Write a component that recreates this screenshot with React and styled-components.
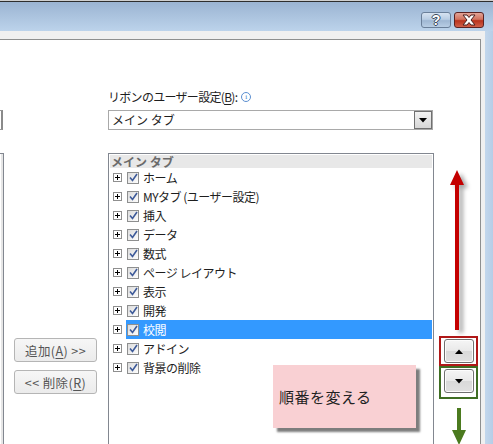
import React from 'react';
import styled, { createGlobalStyle } from 'styled-components';

const GlobalStyle = createGlobalStyle`
  html, body { margin: 0; padding: 0; }
  body {
    font-family: "Noto Sans CJK JP", "Noto Sans", sans-serif;
    font-size: 12px;
    color: #1e1e1e;
  }
`;

const items = [
  'ホーム',
  'MYタブ (ユーザー設定)',
  '挿入',
  'データ',
  '数式',
  'ページ レイアウト',
  '表示',
  '開発',
  '校閲',
  'アドイン',
  '背景の削除',
];
const selectedIndex = 8;

function App() {
  return (
    <>
      <GlobalStyle />
      <Screen>
        <TopStrip />
        <TitleBar>
          <CaptionButton kind="help">
            <HelpMark>?</HelpMark>
          </CaptionButton>
          <CaptionButton kind="close">
            <svg width="16" height="12" viewBox="0 0 16 12">
              <path
                d="M2 1 H6 L8 3.5 L10 1 H14 L10 6 L14 11 H10 L8 8.5 L6 11 H2 L6 6 Z"
                fill="#fff"
                stroke="#4a2020"
                strokeWidth="1"
                strokeLinejoin="round"
              />
            </svg>
          </CaptionButton>
        </TitleBar>

        <Body>
          <Main>
            <Panel>
              <LeftColumn>
                <LeftCombo />
                <LeftRow>
                  <LeftList />
                  <ButtonStack>
                    <PushButton>
                      追加(<u>A</u>) &gt;&gt;
                    </PushButton>
                    <PushButton>
                      &lt;&lt; 削除(<u>R</u>)
                    </PushButton>
                  </ButtonStack>
                </LeftRow>
              </LeftColumn>

              <CenterColumn>
                <FieldLabel>
                  リボンのユーザー設定(<u>B</u>):
                  <InfoIcon>i</InfoIcon>
                </FieldLabel>
                <Combo>
                  <ComboText>メイン タブ</ComboText>
                  <ComboArrow>
                    <svg width="8" height="5" viewBox="0 0 8 5">
                      <path d="M0 0 H8 L4 4.5 Z" fill="#000" />
                    </svg>
                  </ComboArrow>
                </Combo>

                <TreeList>
                  <TreeHeader>メイン タブ</TreeHeader>
                  {items.map((label, i) => (
                    <TreeRow key={label}>
                      <Expander />
                      <ItemBody selected={i === selectedIndex}>
                        <Check>
                          <svg width="9" height="9" viewBox="0 0 9 9">
                            <path
                              d="M1 4.5 L3.5 7.5 L8 1"
                              fill="none"
                              stroke="#3d5a99"
                              strokeWidth="1.6"
                            />
                          </svg>
                        </Check>
                        <ItemLabel>{label}</ItemLabel>
                      </ItemBody>
                    </TreeRow>
                  ))}
                </TreeList>
              </CenterColumn>

              <RightColumn>
                <Outline color="#b01818">
                  <MoveButton>
                    <svg width="8" height="5" viewBox="0 0 8 5">
                      <path d="M0 5 H8 L4 0.5 Z" fill="#000" />
                    </svg>
                  </MoveButton>
                </Outline>
                <Outline color="#3f6e23" tall>
                  <MoveButton>
                    <svg width="8" height="5" viewBox="0 0 8 5">
                      <path d="M0 0 H8 L4 4.5 Z" fill="#000" />
                    </svg>
                  </MoveButton>
                </Outline>
              </RightColumn>

              <UpArrow width="16" height="162" viewBox="0 0 16 162">
                <path d="M8 0 L15 15 H10 V160 H6 V15 H1 Z" fill="#c40000" />
              </UpArrow>
              <DownArrow width="16" height="40" viewBox="0 0 16 40">
                <path d="M6 0 H10 V22 H15 L8 37 L1 22 H6 Z" fill="#4b7a1f" />
              </DownArrow>

              <Callout>順番を変える</Callout>
            </Panel>
          </Main>
          <Frame />
        </Body>
      </Screen>
    </>
  );
}

const Screen = styled.div`
  width: 493px;
  height: 444px;
  overflow: hidden;
  display: flex;
  flex-direction: column;
  background: #f0f0f0;
`;

const TopStrip = styled.div`
  height: 2px;
  background: linear-gradient(#cfcfcf 50%, #2e2e2e 50%);
`;

const TitleBar = styled.div`
  height: 29px;
  box-sizing: border-box;
  padding: 10px 9px 0 0;
  display: flex;
  justify-content: flex-end;
  align-items: flex-start;
  gap: 3px;
  background: linear-gradient(#9bb4d2, #bcd3eb);
`;

const CaptionButton = styled.div`
  width: 30px;
  height: 16px;
  box-sizing: border-box;
  border-radius: 3px;
  display: flex;
  align-items: center;
  justify-content: center;
  border: 1px solid ${(p) => (p.kind === 'close' ? '#5b2222' : '#6a7f99')};
  background: ${(p) =>
    p.kind === 'close'
      ? 'linear-gradient(#e3a497 0%, #d2725e 45%, #b9321c 55%, #d0604a 100%)'
      : 'linear-gradient(#d6e3f1 0%, #b9cde3 45%, #9fb7d3 55%, #b8cde4 100%)'};
`;

const HelpMark = styled.span`
  font-family: "Liberation Sans", Arial, sans-serif;
  font-weight: bold;
  font-size: 14px;
  line-height: 14px;
  color: #fff;
  text-shadow: 1px 0 #3c4a5c, -1px 0 #3c4a5c, 0 1px #3c4a5c, 0 -1px #3c4a5c;
`;

const Body = styled.div`
  flex: 1;
  display: flex;
  min-height: 0;
`;

const Main = styled.div`
  flex: 1;
  display: flex;
  padding: 8px 4px 0 0;
  background: #f0f0f0;
`;

const Frame = styled.div`
  width: 8px;
  background: linear-gradient(90deg, #c3d7ec, #b6cde7);
`;

const Panel = styled.div`
  position: relative;
  flex: 1;
  display: flex;
  background: #fff;
  border-top: 1px solid #8e8f8f;
  border-right: 1px solid #8e8f8f;
`;

const LeftColumn = styled.div`
  width: 108px;
  display: flex;
  flex-direction: column;
  padding-top: 70px;
`;

const LeftCombo = styled.div`
  width: 23px;
  height: 20px;
  margin-left: -20px;
  box-sizing: border-box;
  border: 1px solid #9a9a9a;
  border-right: 2px solid #8a8a8a;
`;

const LeftRow = styled.div`
  flex: 1;
  display: flex;
  margin-top: 23px;
`;

const LeftList = styled.div`
  width: 4px;
  box-sizing: border-box;
  border-right: 1px solid #828790;
  border-top: 1px solid #828790;
  box-shadow: inset -2px 0 0 #e6e6e6;
`;

const ButtonStack = styled.div`
  display: flex;
  flex-direction: column;
  gap: 8px;
  padding: 185px 0 0 10px;
`;

const PushButton = styled.div`
  width: 83px;
  height: 24px;
  box-sizing: border-box;
  border: 1px solid #b5b5b5;
  border-radius: 3px;
  background: linear-gradient(#f6f6f6, #ebebeb);
  display: flex;
  align-items: center;
  justify-content: center;
  font-size: 12.5px;
  letter-spacing: 0.4px;
  color: #555;
  white-space: pre;

  u { text-underline-offset: 2px; }
`;

const CenterColumn = styled.div`
  width: 326px;
  display: flex;
  flex-direction: column;
  padding-top: 50px;
`;

const FieldLabel = styled.div`
  height: 14px;
  line-height: 14px;
  font-size: 12px;
  letter-spacing: -0.7px;
  display: flex;
  align-items: center;
  color: #1e1e1e;

  u { text-underline-offset: 2px; }
`;

const InfoIcon = styled.span`
  width: 8px;
  height: 8px;
  margin-left: 4px;
  border: 1px solid #5b8fd0;
  border-radius: 50%;
  color: #3b78c6;
  font-family: "Liberation Serif", serif;
  font-size: 7px;
  line-height: 8px;
  letter-spacing: 0;
  text-align: center;
`;

const Combo = styled.div`
  margin-top: 6px;
  width: 325px;
  height: 20px;
  box-sizing: border-box;
  border: 1px solid #a9a9a9;
  display: flex;
  align-items: stretch;
`;

const ComboText = styled.div`
  flex: 1;
  padding-left: 3px;
  line-height: 18px;
  font-size: 12px;
`;

const ComboArrow = styled.div`
  width: 18px;
  box-sizing: border-box;
  border: 1px solid #707070;
  background: linear-gradient(#f2f2f2, #d6d6d6);
  display: flex;
  align-items: center;
  justify-content: center;
`;

const TreeList = styled.div`
  flex: 1;
  margin-top: 23px;
  width: 326px;
  box-sizing: border-box;
  border: 1px solid #828790;
  border-bottom: none;
  padding: 1px 1px 0 1px;
`;

const TreeHeader = styled.div`
  height: 13px;
  line-height: 13px;
  background: #e8e8e8;
  color: #6b6b6b;
  font-weight: bold;
  font-size: 12px;
  padding-left: 1px;
`;

const TreeRow = styled.div`
  height: 19px;
  display: flex;
  align-items: stretch;
`;

const Expander = styled.div`
  width: 9px;
  height: 9px;
  margin: 5px 4px 0 3px;
  box-sizing: border-box;
  border: 1px solid #8f8f8f;
  background:
    linear-gradient(#000, #000) center / 5px 1px no-repeat,
    linear-gradient(#000, #000) center / 1px 5px no-repeat,
    #fff;
`;

const ItemBody = styled.div`
  flex: 1;
  display: flex;
  align-items: center;
  padding-left: 1px;
  background: ${(p) => (p.selected ? '#3399ff' : 'transparent')};
  color: ${(p) => (p.selected ? '#fff' : '#1e1e1e')};
`;

const Check = styled.div`
  width: 12px;
  height: 12px;
  box-sizing: border-box;
  border: 1px solid #8e8f8f;
  background: linear-gradient(135deg, #dcdcdc, #fdfdfd);
  display: flex;
  align-items: center;
  justify-content: center;
`;

const ItemLabel = styled.span`
  margin-left: 4px;
  font-size: 12px;
  letter-spacing: -0.5px;
  line-height: 19px;
  white-space: nowrap;
`;

const RightColumn = styled.div`
  display: flex;
  flex-direction: column;
  padding: 296px 0 0 5px;
`;

const Outline = styled.div`
  width: 39px;
  height: ${(p) => (p.tall ? 33 : 30)}px;
  box-sizing: border-box;
  border: 2px solid ${(p) => p.color};
  display: flex;
  align-items: ${(p) => (p.tall ? 'flex-start' : 'center')};
  justify-content: center;
  padding-top: ${(p) => (p.tall ? 1 : 0)}px;
`;

const MoveButton = styled.div`
  width: 30px;
  height: 24px;
  box-sizing: border-box;
  border: 1px solid #707070;
  border-radius: 3px;
  background: linear-gradient(#f5f5f5 0%, #e9e9e9 50%, #d9d9d9 51%, #e1e1e1 100%);
  display: flex;
  align-items: center;
  justify-content: center;
  box-shadow: inset 0 0 0 1px #fcfcfc;
`;

const UpArrow = styled.svg`
  position: absolute;
  left: 449px;
  top: 130px;
  filter: drop-shadow(4px 3px 2px rgba(0, 0, 0, 0.35));
`;

const DownArrow = styled.svg`
  position: absolute;
  left: 451px;
  top: 368px;
`;

const Callout = styled.div`
  position: absolute;
  left: 273px;
  top: 325px;
  width: 143px;
  height: 63px;
  box-sizing: border-box;
  padding-left: 6px;
  display: flex;
  align-items: center;
  background: #f9d0d3;
  box-shadow: 4px 4px 2px #7d7d7d;
  font-size: 15px;
  letter-spacing: 0.5px;
  color: #222;
`;

export default App;
